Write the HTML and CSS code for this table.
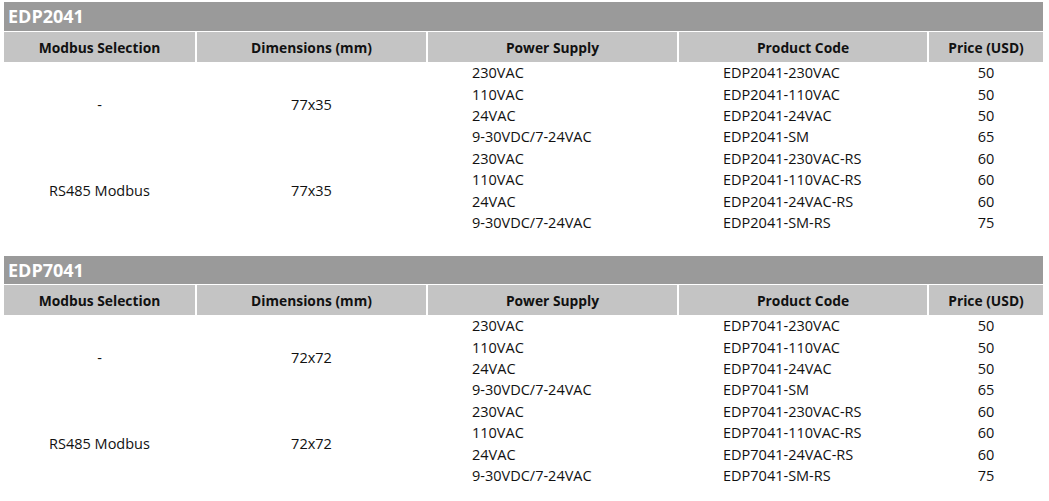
FILE: index.html
```html
<!DOCTYPE html>
<html>
<head>
<meta charset="utf-8">
<link rel="stylesheet" href="styles.css">
</head>
<body>
<div class="page">
  <section class="product">
    <div class="title">EDP2041</div>
    <div class="grid">
      <div class="hd">Modbus Selection</div>
      <div class="hd">Dimensions (mm)</div>
      <div class="hd">Power Supply</div>
      <div class="hd">Product Code</div>
      <div class="hd">Price (USD)</div>

      <div class="span c1 r1">-</div>
      <div class="span c2 r1">77x35</div>
      <div class="ps">230VAC</div><div class="pc">EDP2041-230VAC</div><div class="pr">50</div>
      <div class="ps">110VAC</div><div class="pc">EDP2041-110VAC</div><div class="pr">50</div>
      <div class="ps">24VAC</div><div class="pc">EDP2041-24VAC</div><div class="pr">50</div>
      <div class="ps">9-30VDC/7-24VAC</div><div class="pc">EDP2041-SM</div><div class="pr">65</div>
      <div class="span c1 r2">RS485 Modbus</div>
      <div class="span c2 r2">77x35</div>
      <div class="ps">230VAC</div><div class="pc">EDP2041-230VAC-RS</div><div class="pr">60</div>
      <div class="ps">110VAC</div><div class="pc">EDP2041-110VAC-RS</div><div class="pr">60</div>
      <div class="ps">24VAC</div><div class="pc">EDP2041-24VAC-RS</div><div class="pr">60</div>
      <div class="ps">9-30VDC/7-24VAC</div><div class="pc">EDP2041-SM-RS</div><div class="pr">75</div>
    </div>
  </section>
  <section class="product second">
    <div class="title">EDP7041</div>
    <div class="grid">
      <div class="hd">Modbus Selection</div>
      <div class="hd">Dimensions (mm)</div>
      <div class="hd">Power Supply</div>
      <div class="hd">Product Code</div>
      <div class="hd">Price (USD)</div>

      <div class="span c1 r1">-</div>
      <div class="span c2 r1">72x72</div>
      <div class="ps">230VAC</div><div class="pc">EDP7041-230VAC</div><div class="pr">50</div>
      <div class="ps">110VAC</div><div class="pc">EDP7041-110VAC</div><div class="pr">50</div>
      <div class="ps">24VAC</div><div class="pc">EDP7041-24VAC</div><div class="pr">50</div>
      <div class="ps">9-30VDC/7-24VAC</div><div class="pc">EDP7041-SM</div><div class="pr">65</div>
      <div class="span c1 r2">RS485 Modbus</div>
      <div class="span c2 r2">72x72</div>
      <div class="ps">230VAC</div><div class="pc">EDP7041-230VAC-RS</div><div class="pr">60</div>
      <div class="ps">110VAC</div><div class="pc">EDP7041-110VAC-RS</div><div class="pr">60</div>
      <div class="ps">24VAC</div><div class="pc">EDP7041-24VAC-RS</div><div class="pr">60</div>
      <div class="ps">9-30VDC/7-24VAC</div><div class="pc">EDP7041-SM-RS</div><div class="pr">75</div>
    </div>
  </section>
</div>
</body>
</html>
```
FILE: styles.css
```css
html, body {
  margin: 0;
  padding: 0;
  background: #ffffff;
}
body {
  font-family: "Open Sans", "Liberation Sans", sans-serif;
  color: #111111;
}
.page {
  padding: 2px 6px 0 4px;
  display: flex;
  flex-direction: column;
  gap: 23px;
}
.product {
  display: flex;
  flex-direction: column;
  gap: 1px;
}
.title {
  background: #9a9a9a;
  color: #ffffff;
  font-weight: 700;
  font-size: 18px;
  height: 29px;
  line-height: 29px;
  padding-left: 4px;
}
.second .title {
  height: 28px;
  line-height: 28px;
}
.grid {
  display: grid;
  grid-template-columns: 191px 229px 249px 248px 114px;
  grid-template-rows: 30px repeat(8, 21.4px);
  column-gap: 2px;
}
.hd {
  background: #c4c4c4;
  font-weight: 700;
  font-size: 13.8px;
  display: flex;
  align-items: center;
  justify-content: center;
  color: #111;
}
.span {
  display: flex;
  align-items: center;
  justify-content: center;
  font-size: 14.5px;
}
.c1 { grid-column: 1; }
.c2 { grid-column: 2; }
.r1 { grid-row: 2 / span 4; }
.r2 { grid-row: 6 / span 4; }
.ps, .pc, .pr {
  font-size: 14.5px;
  display: flex;
  align-items: center;
}
.ps { grid-column: 3; padding-left: 44px; }
.pc { grid-column: 4; padding-left: 44px; }
.pr { grid-column: 5; justify-content: center; }
```
